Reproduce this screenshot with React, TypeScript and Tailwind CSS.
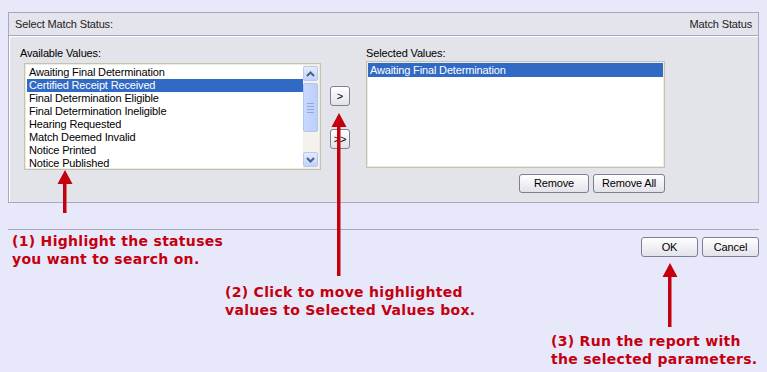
import React from "react";

const available = [
  "Awaiting Final Determination",
  "Certified Receipt Received",
  "Final Determination Eligible",
  "Final Determination Ineligible",
  "Hearing Requested",
  "Match Deemed Invalid",
  "Notice Printed",
  "Notice Published",
];

const selected = ["Awaiting Final Determination"];

function XpButton({ label, className }: { label: string; className: string }) {
  return (
    <button
      className={
        "flex items-center justify-center rounded-[3px] border border-[#7f7f93] bg-gradient-to-b from-white to-[#e2e2ea] text-[11px] text-black " +
        className
      }
    >
      {label}
    </button>
  );
}

function ScrollArrow({ up }: { up: boolean }) {
  return (
    <div className="flex h-[15px] w-[15px] items-center justify-center rounded-[2px] border border-[#b9c8f0] bg-gradient-to-b from-[#e3ebfd] to-[#c2d3fb]">
      <svg width="9" height="6" viewBox="0 0 9 6">
        <path
          d={up ? "M1 5 L4.5 1.5 L8 5" : "M1 1 L4.5 4.5 L8 1"}
          fill="none"
          stroke="#4d6185"
          strokeWidth="2"
        />
      </svg>
    </div>
  );
}

function Arrow({ x, top, bottom }: { x: number; top: number; bottom: number }) {
  return (
    <svg
      className="absolute left-0 top-0 pointer-events-none"
      width="767"
      height="372"
      viewBox="0 0 767 372"
    >
      <polygon points={`${x},${top} ${x - 7.5},${top + 14} ${x + 7.5},${top + 14}`} fill="#c4000e" />
      <rect x={x - 2} y={top + 12} width="3.5" height={bottom - top - 12} fill="#c4000e" />
    </svg>
  );
}

export default function App() {
  return (
    <div className="relative h-[372px] w-[767px] overflow-hidden bg-[#e8e8fb] pt-[12px] font-['Liberation_Sans',Arial,sans-serif] text-[11px] tracking-[-0.15px] text-black">
      {/* parameter panel */}
      <div className="ml-[8px] w-[751px] border border-[#a8a7c1]">
        <div className="flex h-[23px] items-center justify-between border-b border-[#a8a7c1] bg-[#e4e4ec] px-[6px] text-[#222]">
          <span>Select Match Status:</span>
          <span>Match Status</span>
        </div>
        <div className="flex h-[166px] border-l border-t border-white bg-[#e3e3ea] pl-[10px] pt-[10px]">
          <div className="flex flex-col">
            <div className="h-[13px] leading-[13px]">Available Values:</div>
            <div className="ml-[4px] mt-[3px] flex h-[107px] w-[297px] border border-[#c5c2ad] bg-white p-[1px] shadow-[inset_0_0_0_1px_#ecebe1]">
              <div className="flex-1 pl-[1px] pt-[1px]">
                {available.map((v, i) => (
                  <div
                    key={v}
                    className={
                      i === 1
                        ? "h-[13px] bg-[#316ac5] px-[2px] leading-[13px] text-white"
                        : "h-[13px] px-[2px] leading-[13px]"
                    }
                  >
                    {v}
                  </div>
                ))}
              </div>
              <div className="flex w-[16px] flex-col bg-[#f4f2ec] pt-[1px] pb-[1px]">
                <ScrollArrow up />
                <div className="mt-[2px] flex h-[49px] w-[15px] flex-col items-center justify-center gap-[2px] rounded-[2px] border border-[#b1c5f2] bg-gradient-to-r from-[#c9d8fc] to-[#bccffb]">
                  <div className="h-[1px] w-[7px] bg-[#8ea7e2]" />
                  <div className="h-[1px] w-[7px] bg-[#8ea7e2]" />
                  <div className="h-[1px] w-[7px] bg-[#8ea7e2]" />
                  <div className="h-[1px] w-[7px] bg-[#8ea7e2]" />
                </div>
                <div className="flex-1" />
                <ScrollArrow up={false} />
              </div>
            </div>
          </div>

          <div className="ml-[9px] flex flex-col pt-[39px]">
            <XpButton label=">" className="h-[20px] w-[20px] text-[#333]" />
            <XpButton label=">>" className="mt-[23px] h-[20px] w-[20px] text-[#333]" />
          </div>

          <div className="ml-[16px] flex flex-col">
            <div className="h-[13px] leading-[13px]">Selected Values:</div>
            <div className="mt-[1px] h-[107px] w-[299px] border border-[#c5c2ad] bg-white p-[1px] shadow-[inset_0_0_0_1px_#ecebe1]">
              {selected.map((v) => (
                <div key={v} className="h-[14px] bg-[#316ac5] px-[2px] leading-[14px] text-white">
                  {v}
                </div>
              ))}
            </div>
            <div className="mt-[6px] flex justify-end gap-[4px]">
              <XpButton label="Remove" className="h-[19px] w-[70px]" />
              <XpButton label="Remove All" className="h-[19px] w-[72px]" />
            </div>
          </div>
        </div>
      </div>

      {/* bottom bar */}
      <div className="ml-[8px] mt-[26px] w-[751px] border-t border-[#a8a7c1]">
        <div className="mt-[7px] flex justify-end gap-[4px]">
          <XpButton label="OK" className="h-[20px] w-[57px]" />
          <XpButton label="Cancel" className="h-[20px] w-[57px]" />
        </div>
      </div>

      {/* annotations */}
      <Arrow x={65} top={170} bottom={213} />
      <Arrow x={339} top={113} bottom={276} />
      <Arrow x={670} top={263} bottom={327} />

      <div className="absolute left-[12px] top-[232px] font-['DejaVu_Sans',Verdana,sans-serif] text-[14px] font-bold leading-[18px] tracking-[0.3px] text-[#c4000e]">
        (1) Highlight the statuses
        <br />
        you want to search on.
      </div>
      <div className="absolute left-[225px] top-[283px] font-['DejaVu_Sans',Verdana,sans-serif] text-[14px] font-bold leading-[18px] tracking-[0.3px] text-[#c4000e]">
        (2) Click to move highlighted
        <br />
        values to Selected Values box.
      </div>
      <div className="absolute left-[551px] top-[332px] font-['DejaVu_Sans',Verdana,sans-serif] text-[14px] font-bold leading-[18px] tracking-[0.3px] text-[#c4000e]">
        (3) Run the report with
        <br />
        the selected parameters.
      </div>
    </div>
  );
}
